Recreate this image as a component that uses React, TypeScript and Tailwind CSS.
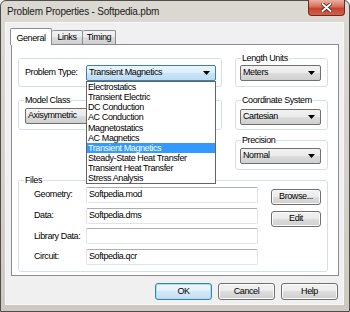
import React from 'react';

const options = [
  'Electrostatics',
  'Transient Electric',
  'DC Conduction',
  'AC Conduction',
  'Magnetostatics',
  'AC Magnetics',
  'Transient Magnetics',
  'Steady-State Heat Transfer',
  'Transient Heat Transfer',
  'Stress Analysis',
];

const files = [
  { label: 'Geometry:', value: 'Softpedia.mod' },
  { label: 'Data:', value: 'Softpedia.dms' },
  { label: 'Library Data:', value: '' },
  { label: 'Circuit:', value: 'Softpedia.qcr' },
];

function Arrow() {
  return (
    <svg width="7" height="4" viewBox="0 0 7 4" className="shrink-0">
      <path d="M0 0H7L3.5 4Z" fill="#000" />
    </svg>
  );
}

function Combo({ value, className, focused }: { value: string; className: string; focused?: boolean }) {
  return (
    <div
      className={`flex h-[16px] items-center justify-between rounded-[2px] border pl-[2px] pr-[5px] ${className} ${
        focused
          ? 'border-[#3c7fb1] bg-[linear-gradient(#eaf5fd_0%,#dcedfb_50%,#c9e4f7_50%,#bcdcf4_100%)]'
          : 'border-[#707070] bg-[linear-gradient(#f2f2f2_0%,#ebebeb_50%,#dddddd_50%,#cfcfcf_100%)]'
      }`}
    >
      <span className="whitespace-nowrap">{value}</span>
      <Arrow />
    </div>
  );
}

function Group({ label, className, children }: { label?: string; className: string; children: React.ReactNode }) {
  return (
    <div className={`relative rounded-[3px] border border-[#d5dfe5] ${className}`}>
      {label && (
        <span className="absolute left-[5px] top-[-6px] whitespace-nowrap bg-white px-[1px] leading-[10px]">{label}</span>
      )}
      {children}
    </div>
  );
}

function Button({ children, className, isDefault }: { children: React.ReactNode; className: string; isDefault?: boolean }) {
  return (
    <div
      className={`flex items-center justify-center rounded-[3px] border ${className} ${
        isDefault
          ? 'border-[#3c7fb1] bg-[linear-gradient(#eef7fd_0%,#e3f1fa_50%,#d2e8f6_50%,#c6e0f2_100%)] shadow-[inset_0_0_0_1px_#a9dcf7]'
          : 'border-[#707070] bg-[linear-gradient(#f2f2f2_0%,#ebebeb_50%,#dddddd_50%,#cfcfcf_100%)] shadow-[inset_0_0_0_1px_#fcfcfc]'
      }`}
    >
      {children}
    </div>
  );
}

function CloseButton() {
  return (
    <div className="ml-auto mr-[4px] -mt-[1px] flex h-[16px] w-[37px] items-center justify-center rounded-b-[4px] border border-t-0 border-[#6b2a20] bg-[linear-gradient(#e9b0a3_0%,#d96d5a_45%,#c5412d_55%,#d0624a_100%)]">
      <svg width="11" height="9" viewBox="0 0 11 9">
        <path d="M1.5 1L9.5 8M9.5 1L1.5 8" stroke="#4a1a12" strokeWidth="3.6" strokeLinecap="round" />
        <path d="M1.5 1L9.5 8M9.5 1L1.5 8" stroke="#fff" strokeWidth="2" strokeLinecap="round" />
      </svg>
    </div>
  );
}

export default function App() {
  return (
    <div className="flex h-[312px] w-[350px] flex-col rounded-t-[6px] border border-[#4e4e4e] bg-[linear-gradient(180deg,#dcd8d2,#cec8c0)] font-['Liberation_Sans',Arial,sans-serif] text-[9px] tracking-[-0.4px] text-black">
      {/* title bar */}
      <div className="flex h-[22px] shrink-0 items-start pl-[6px]">
        <span className="mt-[5px] text-[10px] leading-[12px] tracking-[-0.2px] text-[#1a1a1a]">
          Problem Properties - Softpedia.pbm
        </span>
        <CloseButton />
      </div>

      {/* client area */}
      <div className="mb-[7px] ml-[5px] mr-[6px] flex flex-1 flex-col bg-[#f0f0f0] shadow-[0_0_0_1px_#f7f7f7]">
        {/* tabs */}
        <div className="flex items-end pl-[4px] pt-[5px]">
          <div className="relative z-10 flex h-[17px] w-[42px] items-start justify-center rounded-t-[2px] border border-b-0 border-[#898c95] bg-white pt-[3px]">
            General
          </div>
          <div className="mb-[1px] flex h-[14px] w-[31px] items-center justify-center rounded-t-[2px] border border-b-0 border-l-0 border-[#898c95] bg-[linear-gradient(#f3f3f3_0%,#ebebeb_50%,#dddddd_50%,#cfcfcf_100%)]">
            Links
          </div>
          <div className="mb-[1px] flex h-[14px] w-[33px] items-center justify-center rounded-t-[2px] border border-b-0 border-l-0 border-[#898c95] bg-[linear-gradient(#f3f3f3_0%,#ebebeb_50%,#dddddd_50%,#cfcfcf_100%)]">
            Timing
          </div>
        </div>

        {/* tab panel */}
        <div className="-mt-[1px] ml-[5px] h-[232px] w-[328px] border border-[#898c95] bg-white pl-[6px] pr-[10px] pt-[13px]">
          <div className="flex gap-[13px]">
            <div className="flex w-[204px] flex-col">
              <Group className="h-[29px] pl-[6px] pt-[6px]">
                <div className="flex items-center">
                  <span className="w-[61px]">Problem Type:</span>
                  <div className="relative z-20">
                    <Combo value="Transient Magnetics" className="w-[130px]" focused />
                    <div className="absolute left-0 top-full w-[130px] border border-[#646464] bg-white">
                      {options.map((o) => (
                        <div
                          key={o}
                          className={`h-[10.15px] whitespace-nowrap pl-[1px] leading-[10.15px] ${
                            o === 'Transient Magnetics' ? 'bg-[#3399ff] text-white' : ''
                          }`}
                        >
                          {o}
                        </div>
                      ))}
                    </div>
                  </div>
                </div>
              </Group>
              <Group label="Model Class" className="mt-[13px] h-[30px] pl-[6px] pt-[7px]">
                <Combo value="Axisymmetric" className="w-[190px]" />
              </Group>
            </div>

            <div className="flex w-[93px] flex-col">
              <Group label="Length Units" className="h-[29px] pl-[4px] pt-[6px]">
                <Combo value="Meters" className="w-[81px]" />
              </Group>
              <Group label="Coordinate System" className="mt-[13px] h-[30px] pl-[4px] pt-[8px]">
                <Combo value="Cartesian" className="w-[81px]" />
              </Group>
              <Group label="Precision" className="mt-[10px] h-[30px] pl-[4px] pt-[7px]">
                <Combo value="Normal" className="w-[81px]" />
              </Group>
            </div>
          </div>

          <Group label="Files" className="mt-[10px] flex h-[92px] pl-[15px] pt-[6px]">
            <div className="flex flex-col gap-[4.7px]">
              {files.map((f) => (
                <div key={f.label} className="flex h-[16px] items-center">
                  <span className="w-[52px] whitespace-nowrap">{f.label}</span>
                  <div className="flex h-[16px] w-[172px] items-center rounded-[2px] border border-[#e2e3ea] border-t-[#abadb3] bg-white pl-[2px]">
                    {f.value}
                  </div>
                </div>
              ))}
            </div>
            <div className="ml-[13px] mt-[2px] flex flex-col gap-[6px]">
              <Button className="h-[16px] w-[50px]">Browse...</Button>
              <Button className="h-[16px] w-[50px]">Edit</Button>
            </div>
          </Group>
        </div>

        {/* dialog buttons */}
        <div className="mt-[7px] flex justify-end gap-[6px] pr-[5px]">
          <Button className="h-[17px] w-[57px]" isDefault>
            OK
          </Button>
          <Button className="h-[17px] w-[57px]">Cancel</Button>
          <Button className="h-[17px] w-[57px]">Help</Button>
        </div>
      </div>
    </div>
  );
}
